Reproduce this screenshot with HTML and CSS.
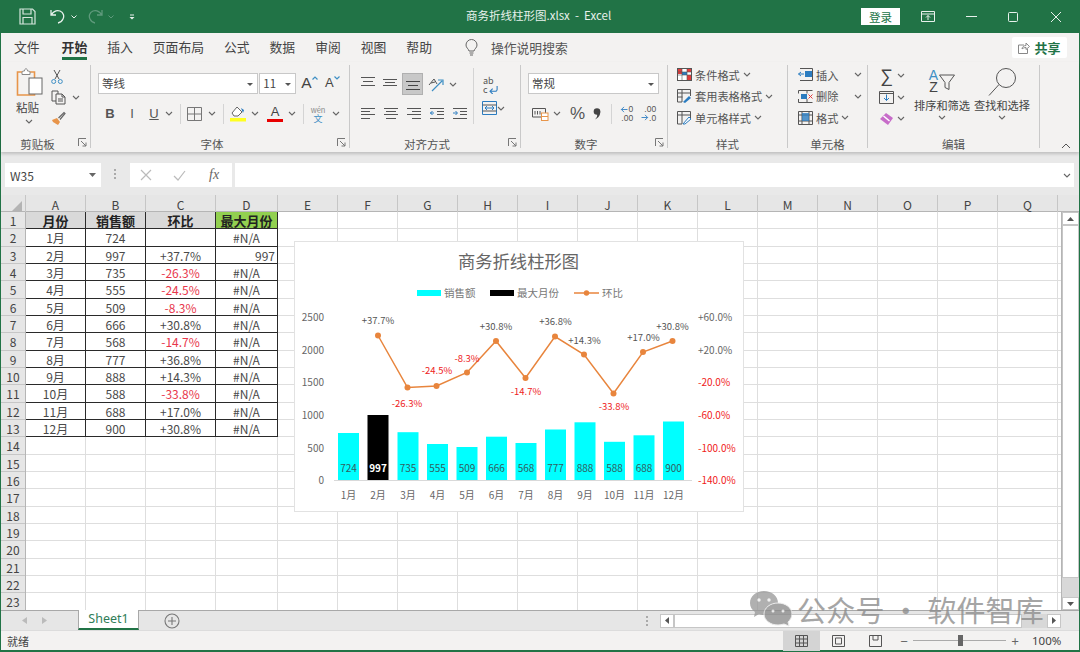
FILE: index.html
```html
<!DOCTYPE html>
<html lang="zh">
<head>
<meta charset="utf-8">
<title>商务折线柱形图.xlsx - Excel</title>
<link rel="stylesheet" href="styles.css">
</head>
<body>
<svg class="sprite" width="0" height="0">
  <symbol id="chev" viewBox="0 0 8 5"><path d="M1 1l3 3 3-3" fill="none" stroke="#666" stroke-width="1.1"/></symbol>
  <symbol id="launch" viewBox="0 0 9 9"><path d="M.5 8V.5H8M3 3l5 5M8 4.500V8H4.500" fill="none" stroke="#777" stroke-width="1"/></symbol>
</svg>
<div class="app">
  <header class="titlebar">
    <div class="qat">
      <svg width="17" height="17" viewBox="0 0 17 17" fill="none" stroke="#d5e6dc" stroke-width="1.200"><path d="M1 1h12.500L16 3.500V16H1zM4 1v5h8V1M4 16V9.500h9V16"/></svg>
      <svg width="16" height="15" viewBox="0 0 16 15" fill="none" stroke="#e8f1ec" stroke-width="1.300"><path d="M1 1v5h5M1.500 5.500C4 2 7 1 10 2c3.500 1.500 4.500 5 3 8-1 2-2.500 3.500-5 4"/></svg>
      <svg class="qc" width="6" height="4"><path d="M.5.500L3 3 5.500.500" fill="none" stroke="#e8f1ec"/></svg>
      <svg class="qr" width="16" height="15" viewBox="0 0 16 15" fill="none" stroke="#5f9a7c" stroke-width="1.300"><path d="M15 1v5h-5M14.500 5.500C12 2 9 1 6 2 2.500 3.500 1.500 7 3 10c1 2 2.500 3.500 5 4"/></svg>
      <svg class="qc" width="6" height="4"><path d="M.5.500L3 3 5.500.500" fill="none" stroke="#5f9a7c"/></svg>
      <svg class="qm" width="6" height="6"><path d="M1 1h4" stroke="#e8f1ec"/><path d="M.5 3h5L3 5.500z" fill="#e8f1ec"/></svg>
    </div>
    <div class="doc-title">商务折线柱形图.xlsx &nbsp;-&nbsp; Excel</div>
    <div class="winctl">
      <button class="login">登录</button>
      <svg class="w1" width="14" height="11" viewBox="0 0 14 11" fill="none" stroke="#e8f1ec"><path d="M.5 .5h13v10H.5zM.5 3h13M7 9V4.500M5 6.500l2-2 2 2"/></svg>
      <svg class="w2" width="11" height="1" viewBox="0 0 11 1"><path d="M0 .5h11" stroke="#e8f1ec"/></svg>
      <svg class="w3" width="10" height="10" viewBox="0 0 10 10"><rect x=".5" y=".5" width="9" height="9" rx="1" fill="none" stroke="#e8f1ec"/></svg>
      <svg class="w4" width="10" height="10" viewBox="0 0 10 10"><path d="M0 0l10 10M10 0L0 10" stroke="#e8f1ec"/></svg>
    </div>
  </header>

  <nav class="tabs">
    <span class="tab">文件</span>
    <span class="tab active">开始</span>
    <span class="tab">插入</span>
    <span class="tab">页面布局</span>
    <span class="tab">公式</span>
    <span class="tab">数据</span>
    <span class="tab">审阅</span>
    <span class="tab">视图</span>
    <span class="tab">帮助</span>
    <svg class="bulb" width="13" height="17" viewBox="0 0 13 17" fill="none" stroke="#666"><path d="M4 12C3.500 9.500 1 9 1 6a5.500 5.500 0 0 1 11 0c0 3-2.500 3.500-3 6zM4.500 14h4M5 16h3"/></svg>
    <span class="tellme">操作说明搜索</span>
    <span class="share">
      <svg width="12" height="12" viewBox="0 0 12 12" fill="none" stroke="#888"><path d="M6 3H.5v8.500h9V7M4 7c0-2 2-3.500 4-3.500V1l3.500 3.500L8 7.500V5.500C6.500 5.500 5 6 4 7z"/></svg>
      <b>共享</b>
    </span>
  </nav>

  <section class="ribbon">
    <div class="group g-clip">
      <div class="gbody clip">
        <div class="big paste">
          <svg width="27" height="29" viewBox="0 0 27 29" fill="none"><path d="M1.500 4h17v23h-17z" stroke="#e8954a" stroke-width="1.600"/><path d="M6 4c0-1 2-1 2.500-1 0-3 3-3 3 0 .5 0 2.500 0 2.500 1v2.500H6z" fill="#fff" stroke="#888"/><rect x="13" y="10" width="13" height="16" fill="#fff" stroke="#666"/></svg>
          <span>粘贴</span>
          <svg class="c" width="8" height="5"><use href="#chev"/></svg>
        </div>
        <div class="clip-col">
          <svg width="12" height="15" viewBox="0 0 12 15" fill="none" stroke="#555"><path d="M3 1l5 9M9 1L4 10"/><circle cx="2.700" cy="12.500" r="2" stroke="#3e8fc4"/><circle cx="9.300" cy="12.500" r="2" stroke="#3e8fc4"/></svg>
          <div class="row"><svg width="16" height="15" viewBox="0 0 16 15" fill="none" stroke="#555"><path d="M5 11H1V1h6v3M5 4h6l3 3v7H5zM11 4v3h3M7 9h5M7 11h5"/></svg><svg class="c" width="8" height="5"><use href="#chev"/></svg></div>
          <svg width="15" height="15" viewBox="0 0 15 15"><path d="M1 9l5-2 3 4-2 3-5-3z" fill="#e8954a"/><path d="M7.500 7L13 1.500 14 2.500 9 8.500" fill="none" stroke="#666" stroke-width="1.200"/></svg>
        </div>
      </div>
      <div class="glabel lb">剪贴板<svg class="launch" width="9" height="9"><use href="#launch"/></svg></div>
    </div>

    <div class="group g-font">
      <div class="gbody stack">
        <div class="row r-top">
          <div class="select fontname">等线<i></i></div>
          <div class="select fontsize">11<i></i></div>
          <span class="growa">A<svg width="6" height="4" viewBox="0 0 6 4"><path d="M.5 3.500L3 1l2.500 2.500" fill="none" stroke="#3e8fc4" stroke-width="1.200"/></svg></span>
          <span class="growa small">A<svg width="6" height="4" viewBox="0 0 6 4"><path d="M.5.500L3 3 5.500.500" fill="none" stroke="#3e8fc4" stroke-width="1.200"/></svg></span>
        </div>
        <div class="row r-bot">
          <b class="fmt b">B</b><i class="fmt it">I</i><u class="fmt un">U</u>
          <svg class="c c1" width="8" height="5"><use href="#chev"/></svg><span class="vsep"></span>
          <svg class="ib" width="15" height="14" viewBox="0 0 15 14" fill="none" stroke="#777"><path d="M.5.500h14v13H.5zM7.500.500v13M.5 7h14"/></svg>
          <svg class="c c2" width="8" height="5"><use href="#chev"/></svg><span class="vsep"></span>
          <svg class="ib fill" width="16" height="17" viewBox="0 0 16 17"><path d="M2 8l5-6 5 5-4 4H4z" fill="#fff" stroke="#666"/><path d="M11 3l3 2-1 3z" fill="#2b7cc0"/><rect y="13" width="16" height="3.500" fill="#ffff20"/></svg>
          <svg class="c c3" width="8" height="5"><use href="#chev"/></svg>
          <span class="fontcolor">A</span>
          <svg class="c c4" width="8" height="5"><use href="#chev"/></svg><span class="vsep"></span>
          <span class="wen"><span>wén</span><em>文</em></span>
          <svg class="c c5" width="8" height="5"><use href="#chev"/></svg>
        </div>
      </div>
      <div class="glabel lb">字体<svg class="launch" width="9" height="9"><use href="#launch"/></svg></div>
    </div>

    <div class="group g-align">
      <div class="gbody alignbody">
        <div class="stack al-main">
          <div class="row al-top">
            <svg width="14" height="11" viewBox="0 0 14 11"><path d="M0 .5h14M2 4.500h10M0 8.500h14" stroke="#555"/></svg>
            <svg width="14" height="11" viewBox="0 0 14 11"><path d="M0 2.500h14M2 5.500h10M0 8.500h14" stroke="#555"/></svg>
            <span class="sel"><svg width="14" height="11" viewBox="0 0 14 11"><path d="M0 2.500h14M2 6.500h10M0 10.500h14" stroke="#444"/></svg></span>
            <svg class="orient" width="16" height="15" viewBox="0 0 16 15" fill="none"><path d="M1 8l5-6 3 5M3 6l4-1" stroke="#555"/><path d="M4 14L14 4M10 3h5v5" stroke="#3e8fc4" stroke-width="1.200"/></svg>
            <svg class="c" width="8" height="5"><use href="#chev"/></svg>
          </div>
          <div class="row al-bot">
            <svg width="14" height="13" viewBox="0 0 14 13"><path d="M0 1.500h14M0 4.500h9M0 7.500h14M0 11.500h9" stroke="#555"/></svg>
            <svg width="14" height="13" viewBox="0 0 14 13"><path d="M0 1.500h14M2 4.500h10M0 7.500h14M2 11.500h10" stroke="#555"/></svg>
            <svg width="14" height="13" viewBox="0 0 14 13"><path d="M0 1.500h14M5 4.500h9M0 7.500h14M5 11.500h9" stroke="#555"/></svg>
            <svg width="14" height="13" viewBox="0 0 14 13"><path d="M0 1.500h14M7 4.500h7M7 7.500h7M0 11.500h14" stroke="#555"/><path d="M0 6l4 0M2.500 4L.5 6l2 2" stroke="#2b7cc0" fill="none"/></svg>
            <svg width="14" height="13" viewBox="0 0 14 13"><path d="M0 1.500h14M7 4.500h7M7 7.500h7M0 11.500h14" stroke="#555"/><path d="M0 6h4M2.500 4l2 2-2 2" stroke="#2b7cc0" fill="none"/></svg>
          </div>
        </div>
        <span class="vsep tall"></span>
        <div class="stack al-side">
          <span class="wrap"><span>ab</span><span class="wl2">c<svg width="10" height="8" viewBox="0 0 11 9" fill="none"><path d="M9 0v4c0 1-1 2-2 2H2M4 3L1 6l3 3" stroke="#2b7cc0" stroke-width="1.200"/></svg></span></span>
          <div class="row"><svg width="15" height="14" viewBox="0 0 15 14" fill="none"><path d="M.5.500h14v13H.5z" stroke="#2b7cc0"/><path d="M.5 4h14M.5 10h14" stroke="#555"/><path d="M3 7h9M5 5L3 7l2 2M10 5l2 2-2 2" stroke="#2b7cc0"/></svg><svg class="c" width="8" height="5"><use href="#chev"/></svg></div>
        </div>
      </div>
      <div class="glabel lb">对齐方式<svg class="launch" width="9" height="9"><use href="#launch"/></svg></div>
    </div>

    <div class="group g-num">
      <div class="gbody stack">
        <div class="row"><div class="select numfmt">常规<i></i></div></div>
        <div class="row num-bot">
          <svg width="17" height="14" viewBox="0 0 17 14" fill="none"><path d="M.5 1.500h13V10H.5z" stroke="#555"/><path d="M3 4v3.500M5.500 4v3.500M8 4v3.500" stroke="#555"/><rect x="9.500" y="6" width="6.500" height="7.500" fill="#fff" stroke="#e8954a"/><path d="M9.500 9.500h6.500" stroke="#e8954a"/></svg>
          <svg class="c" width="8" height="5"><use href="#chev"/></svg>
          <span class="pct">%</span>
          <svg class="comma" width="8" height="12" viewBox="0 0 8 12"><circle cx="4" cy="3.500" r="3.300" fill="#444"/><path d="M7.200 3.500C7.500 7 5.500 10 2 11.500c2-2 2.500-4 2-5z" fill="#444"/></svg>
          <span class="vsep"></span>
          <span class="dec"><span><svg width="8" height="7" viewBox="0 0 8 8" fill="none"><path d="M8 4H1M4 1L1 4l3 3" stroke="#2b7cc0"/></svg>0</span><span>.00</span></span>
          <span class="dec d2"><span>.00</span><span><svg width="8" height="7" viewBox="0 0 8 8" fill="none"><path d="M0 4h7M4 1l3 3-3 3" stroke="#2b7cc0"/></svg>.0</span></span>
        </div>
      </div>
      <div class="glabel lb">数字<svg class="launch" width="9" height="9"><use href="#launch"/></svg></div>
    </div>

    <div class="group g-style">
      <div class="gbody list">
        <div class="li"><svg width="15" height="13" viewBox="0 0 15 13"><rect x=".5" y=".5" width="14" height="12" fill="#fff" stroke="#555"/><rect x="1" y="1" width="4" height="5" fill="#e23b3b"/><rect x="10" y="1" width="4" height="3" fill="#e23b3b"/><rect x="5" y="4" width="5" height="3" fill="#2b7cc0"/><rect x="10" y="7" width="4" height="5" fill="#e23b3b"/><path d="M5 .5v12M10 .5v12M.5 4h14M.5 7h14" stroke="#555" stroke-width=".6"/></svg>条件格式<svg class="c" width="8" height="5"><use href="#chev"/></svg></div>
        <div class="li"><svg width="15" height="14" viewBox="0 0 15 14" fill="none"><path d="M.5 13V.5h13V7M.5 4h13M.5 8h5M5 .5V13H.5" stroke="#555"/><path d="M6 13l6-6 2 2-6 5z" fill="#2b7cc0"/></svg>套用表格格式<svg class="c" width="8" height="5"><use href="#chev"/></svg></div>
        <div class="li"><svg width="15" height="14" viewBox="0 0 15 14" fill="none"><path d="M.5 13V.5h13V7M.5 4h13M5 .5V13H.5" stroke="#555"/><path d="M6 13l6-7 2 2-6 5z" fill="#fff" stroke="#2b7cc0"/></svg>单元格样式<svg class="c" width="8" height="5"><use href="#chev"/></svg></div>
      </div>
      <div class="glabel">样式</div>
    </div>

    <div class="group g-cells">
      <div class="gbody list">
        <div class="li"><svg width="15" height="13" viewBox="0 0 15 13" fill="none"><path d="M2 .5h12.500v12H2" stroke="#555"/><rect x="7" y="3" width="7" height="6" fill="#2b7cc0"/><path d="M6 6H.5M3 4L.5 6 3 8" stroke="#2b7cc0"/></svg><span class="grow">插入</span><svg class="c" width="8" height="5"><use href="#chev"/></svg></div>
        <div class="li"><svg width="15" height="13" viewBox="0 0 15 13" fill="none"><path d="M.5.500h14M.5 12.500h14M.5.500v3M.5 9v3.500M9 .500v3M9 9v3.500" stroke="#555"/><rect x="3" y="4" width="6" height="5" fill="#2b7cc0"/><path d="M10.500 4.500l4 4M14.500 4.500l-4 4" stroke="#e23b3b"/></svg><span class="grow">删除</span><svg class="c" width="8" height="5"><use href="#chev"/></svg></div>
        <div class="li"><svg width="15" height="15" viewBox="0 0 15 15" fill="none"><path d="M.5 1.500h14v13H.5zM.5 5h14M.5 11h14M4 1.500v13M11 1.500v13" stroke="#555"/><rect x="4" y="3" width="7" height="8" fill="#2b7cc0" opacity=".8"/></svg><span>格式</span><svg class="c" width="8" height="5"><use href="#chev"/></svg></div>
      </div>
      <div class="glabel">单元格</div>
    </div>

    <div class="group g-edit">
      <div class="gbody editbody">
        <div class="edit-col">
          <div class="row"><span class="sigma">∑</span><svg class="c" width="8" height="5"><use href="#chev"/></svg></div>
          <div class="row"><svg width="15" height="13" viewBox="0 0 15 13" fill="none"><path d="M.5.500h14v12H.5zM.5 2.500h14" stroke="#555"/><path d="M7.500 3.500v6M5 7l2.500 2.500L10 7" stroke="#2b7cc0"/></svg><svg class="c" width="8" height="5"><use href="#chev"/></svg></div>
          <div class="row"><svg width="15" height="14" viewBox="0 0 15 14"><path d="M1 7l6-6 7 5-5 7z" fill="#c76cc9"/><path d="M4.500 4l6 5" stroke="#fff" stroke-width="1.500"/></svg><svg class="c" width="8" height="5"><use href="#chev"/></svg></div>
        </div>
        <div class="big sort">
          <span class="sorticon"><span class="az"><em>A</em><span>Z</span></span><svg width="16" height="16" viewBox="0 0 16 16" fill="none" stroke="#555"><path d="M.5 1h15L10 8.500v7l-4-2v-5z"/></svg></span>
          <span>排序和筛选</span>
          <svg class="c" width="8" height="5"><use href="#chev"/></svg>
        </div>
        <div class="big find">
          <svg width="28" height="28" viewBox="0 0 28 28" fill="none" stroke="#555"><circle cx="18" cy="10" r="9.500"/><path d="M11 16.500L1 27.500"/></svg>
          <span>查找和选择</span>
          <svg class="c" width="8" height="5"><use href="#chev"/></svg>
        </div>
      </div>
      <div class="glabel">编辑</div>
    </div>
    <svg class="collapse" width="10" height="6" viewBox="0 0 10 6"><path d="M1 5l4-4 4 4" fill="none" stroke="#555"/></svg>
  </section>

  <section class="fbar">
    <div class="namebox">W35<svg width="7" height="4" viewBox="0 0 7 4"><path d="M0 0h7L3.500 4z" fill="#666"/></svg></div>
    <span class="grip"></span>
    <div class="fbtns">
      <svg width="12" height="12" viewBox="0 0 12 12"><path d="M1 1l10 10M11 1L1 11" stroke="#bbb" stroke-width="1.200"/></svg>
      <svg width="13" height="11" viewBox="0 0 13 11"><path d="M1 6l4 4 7-9" fill="none" stroke="#bbb" stroke-width="1.200"/></svg>
      <span class="fx">fx</span>
    </div>
    <div class="finput"><svg width="8" height="5"><use href="#chev"/></svg></div>
  </section>

  <section class="sheet">
    <div class="colheads">
      <div class="corner"><svg width="11" height="11" viewBox="0 0 11 11"><path d="M11 0v11H0z" fill="#b4b4b4"/></svg></div>
      <span>A</span><span>B</span><span>C</span><span>D</span><span>E</span><span>F</span><span>G</span><span>H</span><span>I</span><span>J</span><span>K</span><span>L</span><span>M</span><span>N</span><span>O</span><span>P</span><span>Q</span>
    </div>
    <div class="sheetmain">
      <div class="rowheads">
        <span>1</span><span>2</span><span>3</span><span>4</span><span>5</span><span>6</span><span>7</span><span>8</span><span>9</span><span>10</span><span>11</span><span>12</span><span>13</span><span>14</span><span>15</span><span>16</span><span>17</span><span>18</span><span>19</span><span>20</span><span>21</span><span>22</span><span>23</span>
      </div>
      <div class="cells">
        <div class="tbl">
          <b class="h">月份</b><b class="h">销售额</b><b class="h">环比</b><b class="h hg">最大月份</b>
          <span>1月</span><span>724</span><span></span><span>#N/A</span>
          <span>2月</span><span>997</span><span>+37.7%</span><span class="r">997</span>
          <span>3月</span><span>735</span><span class="neg">-26.3%</span><span>#N/A</span>
          <span>4月</span><span>555</span><span class="neg">-24.5%</span><span>#N/A</span>
          <span>5月</span><span>509</span><span class="neg">-8.3%</span><span>#N/A</span>
          <span>6月</span><span>666</span><span>+30.8%</span><span>#N/A</span>
          <span>7月</span><span>568</span><span class="neg">-14.7%</span><span>#N/A</span>
          <span>8月</span><span>777</span><span>+36.8%</span><span>#N/A</span>
          <span>9月</span><span>888</span><span>+14.3%</span><span>#N/A</span>
          <span>10月</span><span>588</span><span class="neg">-33.8%</span><span>#N/A</span>
          <span>11月</span><span>688</span><span>+17.0%</span><span>#N/A</span>
          <span>12月</span><span>900</span><span>+30.8%</span><span>#N/A</span>
        </div>
        <svg class="chart" width="450" height="271" viewBox="294 241 450 271">
          <rect x="294.500" y="241.500" width="449" height="270" fill="#fff" stroke="#e2e2e2"/>
          <text class="ct" x="518.500" y="268" text-anchor="middle">商务折线柱形图</text>
          <rect x="417" y="290" width="24" height="6" fill="#00ffff"/><text class="lg" x="444" y="297">销售额</text>
          <rect x="490" y="290" width="24" height="6" fill="#000"/><text class="lg" x="517" y="297">最大月份</text>
          <path d="M574 293h25" stroke="#e8853d" stroke-width="1.500"/><circle cx="586.500" cy="293" r="2.700" fill="#e8853d"/><text class="lg" x="602" y="297">环比</text>
          <g class="ax" text-anchor="end">
            <text x="324" y="321">2500</text><text x="324" y="353.500">2000</text><text x="324" y="386">1500</text><text x="324" y="419">1000</text><text x="324" y="451.500">500</text><text x="324" y="484">0</text>
          </g>
          <g class="ax">
            <text x="698" y="321">+60.0%</text><text x="698" y="353.500">+20.0%</text>
            <g class="negt"><text x="698" y="386">-20.0%</text><text x="698" y="419">-60.0%</text><text x="698" y="451.500">-100.0%</text><text x="698" y="484">-140.0%</text></g>
          </g>
          <path d="M334 480.500h358" stroke="#d9d9d9"/>
          <g fill="#00ffff">
            <rect x="338" y="433" width="21" height="47"/><rect x="397.500" y="432.200" width="21" height="47.800"/><rect x="427" y="444" width="21" height="36"/><rect x="456.500" y="447" width="21" height="33"/><rect x="486" y="436.700" width="21" height="43.300"/><rect x="515.500" y="443" width="21" height="37"/><rect x="545" y="429.500" width="21" height="50.500"/><rect x="574.500" y="422.300" width="21" height="57.700"/><rect x="604" y="441.800" width="21" height="38.200"/><rect x="633.500" y="435.300" width="21" height="44.700"/><rect x="663" y="421.500" width="21" height="58.500"/>
          </g>
          <rect x="367.500" y="415" width="21" height="65" fill="#000"/>
          <g class="dl" text-anchor="middle">
            <text x="348.500" y="472">724</text><text class="w" x="378" y="472">997</text><text x="408" y="472">735</text><text x="437.500" y="472">555</text><text x="467" y="472">509</text><text x="496.500" y="472">666</text><text x="526" y="472">568</text><text x="555.500" y="472">777</text><text x="585" y="472">888</text><text x="614.500" y="472">588</text><text x="644" y="472">688</text><text x="673.500" y="472">900</text>
          </g>
          <g class="ax" text-anchor="middle">
            <text x="348.500" y="499">1月</text><text x="378" y="499">2月</text><text x="408" y="499">3月</text><text x="437.500" y="499">4月</text><text x="467" y="499">5月</text><text x="496.500" y="499">6月</text><text x="526" y="499">7月</text><text x="555.500" y="499">8月</text><text x="585" y="499">9月</text><text x="614.500" y="499">10月</text><text x="644" y="499">11月</text><text x="673.500" y="499">12月</text>
          </g>
          <polyline points="378,335.500 407.500,387.500 436.500,386 467,372.500 496,341 525.500,378 555,336.500 584,354.500 613.500,393.500 643,352 672.500,341" fill="none" stroke="#e8853d" stroke-width="1.500"/>
          <g fill="#e8853d">
            <circle cx="378" cy="335.500" r="3"/><circle cx="407.500" cy="387.500" r="3"/><circle cx="436.500" cy="386" r="3"/><circle cx="467" cy="372.500" r="3"/><circle cx="496" cy="341" r="3"/><circle cx="525.500" cy="378" r="3"/><circle cx="555" cy="336.500" r="3"/><circle cx="584" cy="354.500" r="3"/><circle cx="613.500" cy="393.500" r="3"/><circle cx="643" cy="352" r="3"/><circle cx="672.500" cy="341" r="3"/>
          </g>
          <g class="pl" text-anchor="middle">
            <text x="378" y="324">+37.7%</text><text x="496" y="330">+30.8%</text><text x="555.500" y="325">+36.8%</text><text x="584.500" y="344">+14.3%</text><text x="643.500" y="341">+17.0%</text><text x="672.500" y="330">+30.8%</text>
            <g class="negl"><text x="407" y="407">-26.3%</text><text x="437" y="374">-24.5%</text><text x="467" y="362">-8.3%</text><text x="526" y="395">-14.7%</text><text x="614" y="410">-33.8%</text></g>
          </g>
        </svg>
      </div>
      <div class="vscroll">
        <span class="sbtn"><svg width="7" height="4" viewBox="0 0 7 4"><path d="M0 4h7L3.500 0z" fill="#555"/></svg></span>
        <span class="sthumb"></span>
        <span class="sfill"></span>
        <span class="sbtn"><svg width="7" height="4" viewBox="0 0 7 4"><path d="M0 0h7L3.500 4z" fill="#555"/></svg></span>
      </div>
    </div>
  </section>

  <section class="tabbar">
    <svg class="nav" width="5" height="7" viewBox="0 0 5 7"><path d="M5 0v7L0 3.500z" fill="#bbb"/></svg>
    <svg class="nav n2" width="5" height="7" viewBox="0 0 5 7"><path d="M0 0v7l5-3.500z" fill="#bbb"/></svg>
    <span class="sheettab">Sheet1</span>
    <svg class="addsheet" width="16" height="16" viewBox="0 0 16 16" fill="none" stroke="#777" stroke-width="1.100"><circle cx="8" cy="8" r="7"/><path d="M8 4v8M4 8h8"/></svg>
    <span class="hgrip"></span>
    <div class="hscroll">
      <span class="hbtn"><svg width="4" height="7" viewBox="0 0 4 7"><path d="M4 0v7L0 3.500z" fill="#555"/></svg></span>
      <span class="hthumb"></span>
      <span class="htrack"></span>
      <span class="hbtn"><svg width="4" height="7" viewBox="0 0 4 7"><path d="M0 0v7l4-3.500z" fill="#555"/></svg></span>
    </div>
  </section>

  <footer class="status">
    <span class="ready">就绪</span>
    <span class="view on"><svg width="13" height="12" viewBox="0 0 13 12" fill="none" stroke="#555"><path d="M.5.500h12v11H.5zM4.500.500v11M8.500.500v11M.5 4h12M.5 8h12"/></svg></span>
    <span class="view"><svg width="13" height="12" viewBox="0 0 13 12" fill="none" stroke="#555"><path d="M.5.500h12v11H.5zM3.500 3h6v6h-6z"/></svg></span>
    <span class="view"><svg width="13" height="12" viewBox="0 0 13 12" fill="none" stroke="#555"><path d="M.5.500h12v11H.5zM4 .500v4.500h5V.500"/></svg></span>
    <div class="zoom">
      <span class="zm">−</span>
      <span class="slider"><i></i></span>
      <span class="zm">+</span>
    </div>
    <span class="pct100">100%</span>
  </footer>

  <div class="watermark">
    <svg width="42" height="36" viewBox="0 0 42 36"><path d="M14 0C6 0 0 5 0 12c0 4 2 7 5 9l-1 5 5-3c2 .6 3.500 1 5 1 8 0 14-5 14-12S22 0 14 0z" fill="#9a9a9a"/><path d="M28 12c8 0 14 5 14 11 0 3.500-2 6-4 8l1 4-5-2c-2 .5-4 1-6 1-8 0-14-5-14-11s6-11 14-11z" fill="#8c8c8c" stroke="#e8e8e8" stroke-width="1"/><circle cx="9" cy="9" r="1.700" fill="#eee"/><circle cx="19" cy="9" r="1.700" fill="#eee"/><circle cx="23" cy="20" r="1.500" fill="#eee"/><circle cx="33" cy="20" r="1.500" fill="#eee"/></svg>
    <span>公众号 · 软件智库</span>
  </div>
</div>
</body>
</html>
```
FILE: styles.css
```css
* { box-sizing: border-box; }
html, body { margin: 0; padding: 0; }
body { width: 1080px; height: 652px; overflow: hidden; font-family: "Noto Sans CJK SC", "Noto Sans", sans-serif; color: #444; font-size: 12px; }
svg { display: block; flex: none; }
.sprite { position: absolute; }
.app { position: relative; width: 1080px; height: 652px; display: flex; flex-direction: column; background: #f3f2f1; border-left: 1px solid #217346; border-right: 1px solid #217346; border-bottom: 2px solid #217346; }

/* title bar */
.titlebar { height: 33px; background: #217346; display: flex; align-items: center; color: #e8f1ec; flex: none; margin: 0 -1px; }
.qat { width: 354px; display: flex; align-items: center; padding-left: 19px; }
.qat svg { margin-right: 4px; }
.qat svg:nth-child(2) { margin-left: 10px; margin-right: 5px; }
.qat .qr { margin-left: 6px; margin-right: 5px; }
.qat .qm { margin-left: 11px; }
.doc-title { flex: none; width: 300px; padding-left: 112px; padding-bottom: 3px; white-space: nowrap; font-size: 11.500px; }
.winctl { flex: 1; display: flex; align-items: center; padding-left: 207px; }
.login { width: 39px; height: 17px; border: 0; background: #fff; color: #217346; font: 11.500px "Noto Sans CJK SC", sans-serif; padding: 0; }
.w1 { margin-left: 21px; }
.w2 { margin-left: 31px; }
.w3 { margin-left: 31px; }
.w4 { margin-left: 33px; }

/* tabs */
.tabs { height: 29px; flex: none; display: flex; align-items: center; font-size: 12.800px; position: relative; padding-left: 13px; gap: 20px; }
.tab { height: 29px; line-height: 27px; position: relative; color: #444; flex: none; }
.tab.active { margin-left: 2px; font-weight: 700; color: #333; }
.tab.active::after { content: ""; position: absolute; left: 0; right: 0; bottom: 2px; height: 3px; background: #217346; }
.bulb { margin-left: 13px; }
.tellme { margin-left: -7px; color: #555; }
.share { margin-left: auto; margin-right: 12px; width: 55px; height: 21px; background: #fff; display: flex; align-items: center; justify-content: center; gap: 4px; border-radius: 2px; color: #217346; font-size: 13px; }

/* ribbon */
.ribbon { height: 90px; flex: none; display: flex; position: relative; box-shadow: 0 2px 3px rgba(0,0,0,.18); z-index: 2; padding-top: 3px; padding-bottom: 4px; font-size: 11.200px; }
.group { display: flex; flex-direction: column; position: relative; border-right: 1px solid #c9c9c9; flex: none; }
.g-clip { width: 90px; }
.g-font { width: 259px; }
.g-align { width: 171px; }
.g-num { width: 147px; }
.g-style { width: 120px; }
.g-cells { width: 80px; }
.g-edit { width: 172px; }
.gbody { flex: 1; min-height: 0; }
.glabel { height: 14px; line-height: 20px; text-align: center; font-size: 11.500px; color: #555; }
.glabel.lb { padding-right: 16px; }
.launch { position: absolute; right: 3px; bottom: 1px; }
.row { display: flex; align-items: center; }
.stack { display: flex; flex-direction: column; }
.big { display: flex; flex-direction: column; align-items: center; }
.vsep { width: 1px; height: 20px; background: #d4d4d4; flex: none; }
.c { flex: none; }

/* clipboard */
.clip { display: flex; padding-left: 15px; }
.paste { width: 26px; padding-top: 3px; }
.paste span { margin-top: 2px; margin-left: -3px; line-height: 16px; white-space: nowrap; font-size: 11.500px; }
.paste .c { margin-top: 4px; }
.clip-col { margin-left: 9px; padding-top: 4px; display: flex; flex-direction: column; gap: 6px; }
.clip-col .row { gap: 5px; }

/* font */
.select { height: 21px; background: #fff; border: 1px solid #c8c8c8; position: relative; line-height: 19px; padding-left: 3px; font-size: 11.500px; }
.select i { position: absolute; right: 4px; top: 9px; border: 3px solid transparent; border-top: 3px solid #555; border-bottom: 0; }
.g-font .stack { padding-left: 7px; }
.r-top { padding-top: 5px; height: 31px; }
.fontname { width: 161px; }
.fontsize { width: 37px; margin-left: 1px; }
.growa { font-size: 15.500px; color: #444; width: 24px; margin-left: 5px; display: flex; align-items: flex-start; line-height: 20px; font-family: "Liberation Sans", sans-serif; }
.growa svg { margin: 3px 0 0 0; }
.growa.small { font-size: 13px; margin-left: 0; }
.r-bot { height: 30px; padding-left: 5px; padding-top: 5px; }
.fmt { width: 14px; text-align: center; font: 13px "Liberation Sans", sans-serif; color: #555; }
.b { font-weight: 700; }
.it { margin-left: 8px; }
.un { margin-left: 8px; }
.c1 { margin-left: 4px; }
.r-bot .vsep { margin-left: 7px; }
.ib { margin-left: 6px; }
.c2 { margin-left: 6px; }
.fill { margin-left: 6px; }
.c3 { margin-left: 5px; }
.fontcolor { width: 16px; margin-left: 8px; text-align: center; height: 17px; line-height: 13px; font-size: 13px; border-bottom: 3px solid #e80000; font-family: "Liberation Sans", sans-serif; }
.c4 { margin-left: 5px; }
.wen { width: 16px; margin-left: 6px; text-align: center; font-size: 7.500px; line-height: 9px; color: #888; white-space: nowrap; display: flex; flex-direction: column; align-items: center; }
.wen em { font-style: normal; color: #3e8fc4; font-size: 9px; }
.c5 { margin-left: 6px; }

/* alignment */
.alignbody { display: flex; padding-left: 11px; }
.al-main { width: 112px; }
.al-top { height: 31px; padding-top: 7px; gap: 8px; }
.al-top > svg:nth-child(-n+2) { margin-top: -3px; }
.sel { width: 21px; height: 22px; background: #c8c8c8; border: 1px solid #b0b0b0; display: flex; align-items: center; justify-content: center; margin-left: -3px; }
.orient { margin-left: -3px; }
.al-top .c { margin-left: -3px; }
.al-bot { height: 29px; padding-top: 5px; gap: 9px; }
.vsep.tall { height: 56px; margin: 3px 0 0; }
.al-side { padding-left: 8px; align-items: flex-start; }
.wrap { height: 29px; font-size: 9px; line-height: 9px; padding-top: 11px; margin-left: 1px; margin-bottom: 7px; color: #555; display: flex; flex-direction: column; }
.wl2 { display: flex; align-items: center; gap: 1px; }

/* number */
.g-num .stack { padding-left: 7px; }
.g-num .row:first-child { height: 31px; padding-top: 5px; }
.numfmt { width: 131px; }
.num-bot { height: 30px; padding: 5px 0 0 4px; }
.num-bot .c { margin-left: 4px; }
.pct { margin-left: 9px; font-size: 17px; color: #555; font-family: "Liberation Sans", sans-serif; }
.comma { margin-left: 8px; }
.num-bot .vsep { margin-left: 10px; }
.dec { margin-left: 5px; font: 8.500px/8.500px "Liberation Sans", sans-serif; width: 16px; color: #555; display: flex; flex-direction: column; align-items: flex-end; }
.dec.d2 { margin-left: 7px; }
.dec > span { display: flex; align-items: center; }

/* list groups */
.list { display: flex; flex-direction: column; padding: 0 0 0 9px; margin-top: -1px; }
.g-cells .list { padding-left: 10px; }
.li { height: 21.500px; display: flex; align-items: center; gap: 3px; white-space: nowrap; color: #555; }
.grow { margin-right: 5px; width: 30px; }

/* editing */
.editbody { display: flex; padding-left: 11px; }
.edit-col { width: 37px; display: flex; flex-direction: column; }
.edit-col .row { height: 21.500px; gap: 3px; }
.sigma { width: 15px; text-align: center; font: 18px/20px "Liberation Sans", sans-serif; }
.sort { width: 52px; padding-top: 3px; }
.find { width: 68px; padding-top: 3px; }
.big > span { white-space: nowrap; }
.sort > span:nth-child(2), .find > span { line-height: 14px; }
.find > span { margin-top: 2px; }
.sort > span:nth-child(2) { margin-top: 5px; }
.sort .c, .find .c { margin-top: 3px; }
.sorticon { height: 25px; display: flex; align-items: flex-end; }
.az { font: 14px/12px "Liberation Sans", sans-serif; display: flex; flex-direction: column; align-items: center; margin-right: 1px; }
.az em { font-style: normal; color: #3e8fc4; }
.sorticon svg { margin-bottom: 3px; }
.collapse { position: absolute; right: 8px; bottom: 3px; }

/* formula bar */
.fbar { height: 43px; flex: none; background: #e9e9e9; display: flex; align-items: flex-start; padding: 11px 5px 0 4px; }
.namebox { width: 96px; height: 24px; background: #fff; display: flex; align-items: center; justify-content: space-between; padding: 0 5px; font-size: 12px; color: #444; }
.grip { width: 2px; height: 11px; margin: 6px 14px 0 13px; background: repeating-linear-gradient(#aaa 0 2px, transparent 2px 4px); }
.fbtns { width: 102px; height: 24px; background: #fff; display: flex; align-items: center; padding-left: 10px; gap: 21px; }
.fx { font: italic 14px "Liberation Serif", serif; color: #666; margin-left: 2px; }
.finput { flex: 1; height: 24px; background: #fff; margin-left: 3px; display: flex; align-items: center; justify-content: flex-end; padding-right: 3px; }

/* sheet */
.sheet { flex: 1; min-height: 0; display: flex; flex-direction: column; background: #fff; }
.colheads { height: 17px; flex: none; display: grid; grid-template-columns: 25px 60px 60px 70px 62px repeat(13, 60px); background: #e6e6e6; border-bottom: 1px solid #b5b5b5; font-size: 12px; line-height: 19px; text-align: center; }
.colheads span { border-right: 1px solid #c6c6c6; }
.corner { display: flex; align-items: flex-end; justify-content: flex-end; padding: 0 3px 2px 0; border-right: 1px solid #c6c6c6; }
.sheetmain { flex: 1; min-height: 0; display: flex; position: relative; overflow: hidden; }
.rowheads { width: 25px; flex: none; display: grid; grid-auto-rows: 17.330px; background: #e6e6e6; border-right: 1px solid #b5b5b5; font-size: 12px; text-align: center; }
.rowheads span { line-height: 18px; border-bottom: 1px solid #c6c6c6; }
.cells { flex: 1; min-width: 0; position: relative; overflow: hidden; background-color: #fff;
  background-image: repeating-linear-gradient(to bottom, transparent 0, transparent 16.330px, #dedede 16.330px, #dedede 17.330px), linear-gradient(to right, transparent 59px, #dedede 59px, #dedede 60px, transparent 60px, transparent 119px, #dedede 119px, #dedede 120px, transparent 120px, transparent 189px, #dedede 189px, #dedede 190px, transparent 190px, transparent 251px, #dedede 251px, #dedede 252px, transparent 252px), repeating-linear-gradient(to right, transparent 0, transparent 59px, #dedede 59px, #dedede 60px);
  background-size: auto, auto, 780px 100%; background-position: 0 0, 0 0, 252px 0; background-repeat: repeat, no-repeat, no-repeat; }
.tbl { display: grid; grid-template-columns: 60px 60px 70px 62px; grid-auto-rows: 17.330px; width: 252px; font-size: 12px; text-align: center; line-height: 18px; color: #4a4a4a; background: #fff; }
.tbl > * { border-right: 1px solid #2a2a2a; border-bottom: 1px solid #2a2a2a; white-space: nowrap; }
.tbl .h { background: #d9d9d9; font-size: 13px; color: #222; font-weight: 700; }
.tbl .hg { background: #92d050; }
.tbl .r { text-align: right; padding-right: 2px; }
.tbl .neg { color: #e8374b; }
.chart { position: absolute; left: 268px; top: 29px; }
.chart text { font-family: "Noto Sans CJK SC", "Noto Sans", sans-serif; }
.chart .ct { font-size: 17.300px; fill: #666; }
.chart .lg { font-size: 10.500px; fill: #777; }
.chart .ax { font-size: 10px; fill: #666; }
.chart .negt { fill: #f02020; }
.chart .dl { font-size: 10px; fill: #30605f; }
.chart .dl .w { fill: #fff; font-weight: 700; }
.chart .pl { font-size: 9.500px; fill: #555; }
.chart .negl { fill: #ee2222; }
.vscroll { width: 18px; flex: none; background: #d8d8d8; border-left: 1px solid #b5b5b5; display: flex; flex-direction: column; }
.sbtn { height: 13px; background: #fff; border: 1px solid #c6c6c6; display: flex; align-items: center; justify-content: center; flex: none; }
.sthumb { height: 353px; background: #fff; border: 1px solid #c6c6c6; flex: none; }
.sfill { flex: 1; }

/* sheet tabs */
.tabbar { height: 20px; flex: none; background: #e6e6e6; border-top: 1px solid #a8a8a8; display: flex; align-items: center; }
.nav { margin-left: 21px; }
.nav.n2 { margin-left: 15px; }
.sheettab { width: 61px; height: 20px; margin-left: 31px; margin-top: -1px; background: #fff; border-bottom: 2px solid #217346; border-left: 1px solid #a8a8a8; border-right: 1px solid #a8a8a8; color: #2f7d58; text-align: center; font: 12.500px/18px "Noto Sans", sans-serif; align-self: flex-start; }
.addsheet { margin-left: 25px; }
.hgrip { width: 2px; height: 10px; margin-left: 466px; background: repeating-linear-gradient(#aaa 0 2px, transparent 2px 4px); }
.hscroll { margin-left: 12px; width: 401px; height: 14px; display: flex; align-items: center; background: #d8d8d8; }
.hbtn { width: 14px; height: 14px; background: #fff; border: 1px solid #c6c6c6; display: flex; align-items: center; justify-content: center; flex: none; }
.hthumb { width: 348px; height: 14px; background: #fff; border: 1px solid #c6c6c6; flex: none; }
.htrack { flex: 1; }

/* status bar */
.status { height: 20px; flex: none; background: #f3f2f1; display: flex; align-items: center; border-top: 1px solid #dcdcdc; }
.ready { margin-left: 6px; font-size: 11px; width: 776px; }
.view { width: 37px; height: 20px; display: flex; align-items: center; justify-content: center; }
.view.on { background: #d4d4d4; }
.zoom { display: flex; align-items: center; margin-left: 4px; }
.zm { font-size: 13px; width: 12px; text-align: center; color: #666; }
.slider { width: 93px; height: 1px; margin: 0 3px; background: #aaa; position: relative; }
.slider i { position: absolute; left: 45px; top: -5px; width: 5px; height: 11px; background: #666; }
.pct100 { margin-left: 11px; font-size: 11.500px; font-family: "Noto Sans", sans-serif; }

/* watermark */
.watermark { position: absolute; left: 749px; top: 590px; display: flex; align-items: center; gap: 5px; opacity: .78; color: #8c8c8c; font-size: 29px; letter-spacing: .2px; line-height: 38px; white-space: nowrap; z-index: 5; }
```
